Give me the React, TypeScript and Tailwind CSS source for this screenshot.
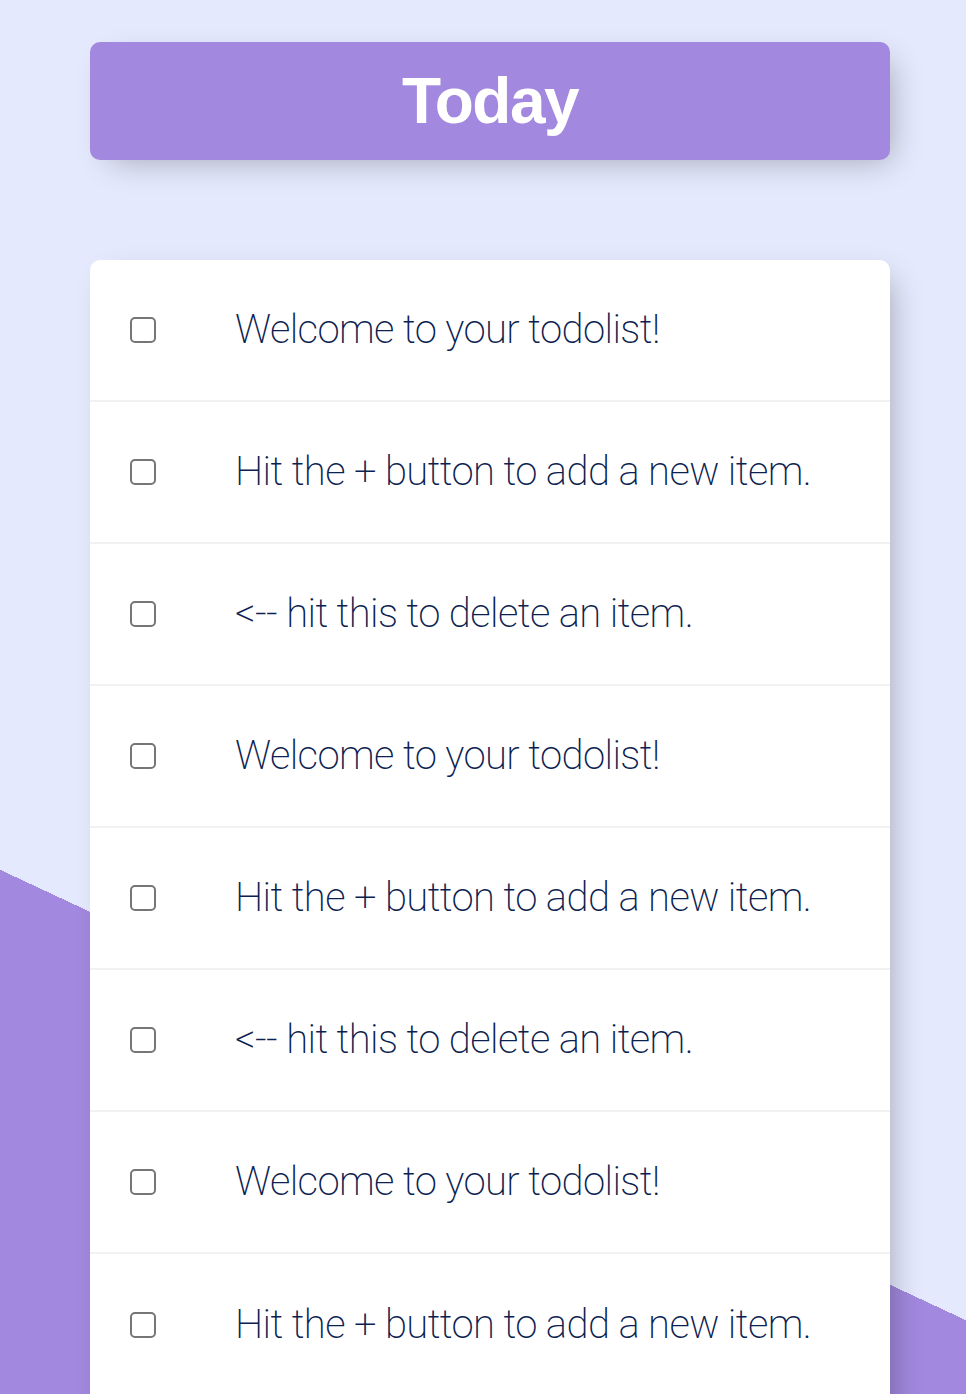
import React from "react";

const items = [
  "Welcome to your todolist!",
  "Hit the + button to add a new item.",
  "<-- hit this to delete an item.",
  "Welcome to your todolist!",
  "Hit the + button to add a new item.",
  "<-- hit this to delete an item.",
  "Welcome to your todolist!",
  "Hit the + button to add a new item.",
];

export default function App() {
  return (
    <div className="h-[1394px] overflow-hidden bg-[#E4E9FD] bg-[linear-gradient(25deg,#A288DE_50%,#E4E9FD_50%)] bg-[length:966px_2190px] bg-no-repeat bg-top pt-[42px]">
      <div className="ml-[90px] w-[800px] h-[118px] rounded-[10px] bg-[#A288DE] flex items-center justify-center shadow-[10px_10px_30px_-10px_rgba(0,0,0,0.3)]">
        <h1 className="text-white text-[64px] font-bold tracking-[-1.5px] leading-none font-['Liberation_Sans',Arial,sans-serif]">
          Today
        </h1>
      </div>
      <div className="ml-[90px] mt-[100px] w-[800px] pb-[40px] rounded-[10px] bg-white shadow-[10px_10px_30px_-10px_rgba(0,0,0,0.3)]">
        {items.map((t, i) => (
          <div
            key={i}
            className="flex items-center min-h-[142px] border-b-2 border-[#F1F1F1] last:border-b-0"
          >
            <div className="ml-[40px] mr-[40px] w-[26px] h-[26px] shrink-0 rounded-[5px] border-2 border-[#767676] bg-white" />
            <p className="py-[40px] pl-[39px] pr-[40px] m-0 text-[40px] font-extralight tracking-[-0.6px] leading-[1.15] text-[#0b2250] font-['Roboto','Liberation_Sans',sans-serif]">
              {t}
            </p>
          </div>
        ))}
      </div>
    </div>
  );
}
